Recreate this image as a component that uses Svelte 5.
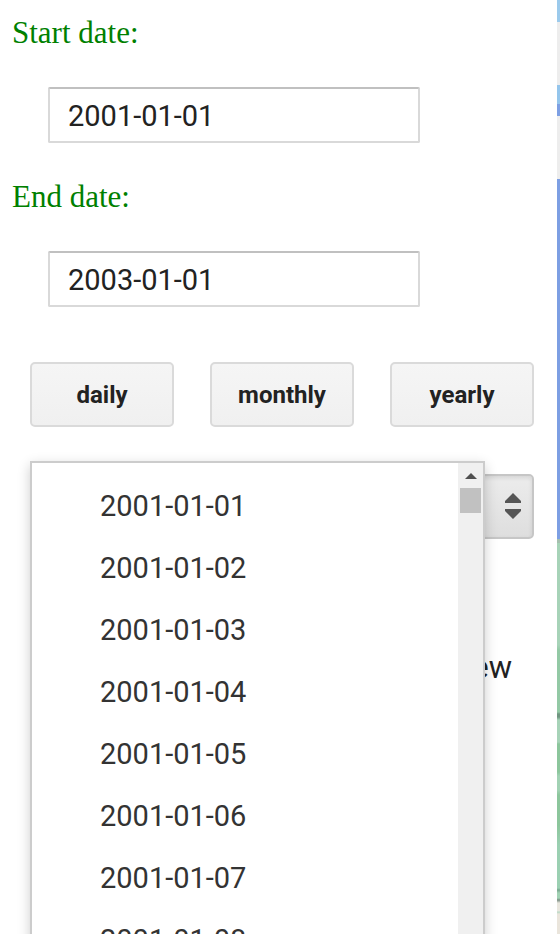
<script>
  const days = Array.from({ length: 8 }, (_, i) => `2001-01-${String(i + 1).padStart(2, '0')}`);
  const steps = ['daily', 'monthly', 'yearly'];
  let start = $state('2001-01-01');
  let end = $state('2003-01-01');
  let step = $state('daily');
  let selected = $state('2001-01-01');
</script>

<div class="app">
  <main class="panel">
    <div class="field">
      <label for="start">Start date:</label>
      <input id="start" type="text" bind:value={start} />
    </div>
    <div class="field">
      <label for="end">End date:</label>
      <input id="end" type="text" bind:value={end} />
    </div>

    <div class="steps">
      {#each steps as name}
        <button type="button" aria-pressed={step === name} onclick={() => (step = name)}>{name}</button>
      {/each}
    </div>

    <div class="picker">
      <select aria-label="Date" bind:value={selected}>
        {#each days as day}
          <option value={day}>{day}</option>
        {/each}
      </select>
      <svg class="updown" width="16" height="26" viewBox="0 0 16 26" aria-hidden="true">
        <path d="M8 0L16 8V10H0V8ZM0 16H16V18L8 26L0 18Z" fill="#555" />
      </svg>

      <div class="popup">
        <div class="list" role="listbox" aria-label="Dates">
          {#each days as day}
            <button type="button" role="option" aria-selected={selected === day} onclick={() => (selected = day)}>{day}</button>
          {/each}
        </div>
        <div class="track" aria-hidden="true">
          <svg width="12" height="6" viewBox="0 0 12 6"><path d="M6 0L12 6H0Z" fill="#505050" /></svg>
          <div class="thumb"></div>
        </div>
      </div>
    </div>

    <p class="note">ew</p>
  </main>
  <aside class="map" aria-label="Map"></aside>
</div>

<style>
  :global(body) {
    margin: 0;
    background: #fff;
  }

  .app {
    display: flex;
    height: 100vh;
    overflow: hidden;
    font-family: Roboto, 'Liberation Sans', sans-serif;
    color: #222;
  }

  .panel {
    flex: 1;
    min-width: 0;
    box-sizing: border-box;
    padding: 15px 23px 0 12px;
  }

  .field {
    display: flex;
    flex-direction: column;
    gap: 36px;
    margin-bottom: 36px;
  }

  label {
    font: 31px/36px 'Liberation Serif', serif;
    color: #008000;
  }

  input {
    box-sizing: border-box;
    height: 56px;
    margin: 0 114px 0 36px;
    padding: 2px 18px 0;
    border: 2px solid #d9d9d9;
    border-top-color: #c0c0c0;
    border-radius: 2px;
    background: #fff;
    font: 29px/36px Roboto, sans-serif;
    color: #222;
    outline: none;
  }

  .steps {
    display: flex;
    gap: 36px;
    margin: 55px 0 47px 18px;
  }

  .steps button {
    flex: 1;
    height: 65px;
    padding: 0;
    border: 2px solid #dadada;
    border-radius: 5px;
    background: linear-gradient(#f5f5f5, #f0f0f0);
    font: bold 24px/36px Roboto, sans-serif;
    color: #222;
  }

  .picker {
    position: relative;
    margin-left: 18px;
  }

  select {
    display: block;
    appearance: none;
    width: 100%;
    height: 65px;
    padding: 0 60px 0 16px;
    border: 2px solid #c6c6c6;
    border-radius: 5px;
    background: linear-gradient(#ececec, #dedede);
    box-shadow: inset 0 2px 4px rgba(0, 0, 0, 0.1);
    font: bold 24px/36px Roboto, sans-serif;
    color: #333;
  }

  .updown {
    position: absolute;
    top: 19px;
    right: 13px;
    pointer-events: none;
  }

  .popup {
    position: absolute;
    top: -13px;
    left: 0;
    right: 49px;
    display: flex;
    border: 2px solid #ccc;
    background: #fff;
    box-shadow: 0 4px 12px rgba(0, 0, 0, 0.2);
  }

  .list {
    flex: 1;
    display: flex;
    flex-direction: column;
    padding: 12px 0;
  }

  .list button {
    height: 62px;
    padding: 0 68px;
    border: 0;
    background: none;
    text-align: left;
    font: 29px/36px Roboto, sans-serif;
    color: #333;
  }

  .track {
    display: flex;
    flex-direction: column;
    align-items: center;
    gap: 9px;
    width: 25px;
    padding-top: 10px;
    background: #f0f0f0;
  }

  .thumb {
    width: 21px;
    height: 25px;
    background: #c1c1c1;
  }

  .note {
    margin: 111px 22px 0 0;
    text-align: right;
    font-size: 31px;
    line-height: 36px;
  }

  .map {
    width: 3px;
    background: linear-gradient(
      #9bcaec 0 22px,
      #ededed 22px 85px,
      #94c5ec 85px 104px,
      #7d9fe3 104px 116px,
      #ededed 116px 179px,
      #7d9fe3 179px 539px,
      #a5bfae 539px 543px,
      #a7d3b8 543px 645px,
      #93c9a5 650px 712px,
      #6f9580 714px 717px,
      #a7d3b8 720px 742px,
      #8cc69c 744px 772px,
      #a2d2b4 776px 790px,
      #8cc69c 795px 825px,
      #9bd0b2 845px 888px,
      #78a58e 890px,
      #a2d2b4 893px 898px,
      #7c8f84 900px,
      #e9e7df 903px 911px,
      #b5d8c4 912px,
      #eae5dc 914px
    );
  }
</style>
